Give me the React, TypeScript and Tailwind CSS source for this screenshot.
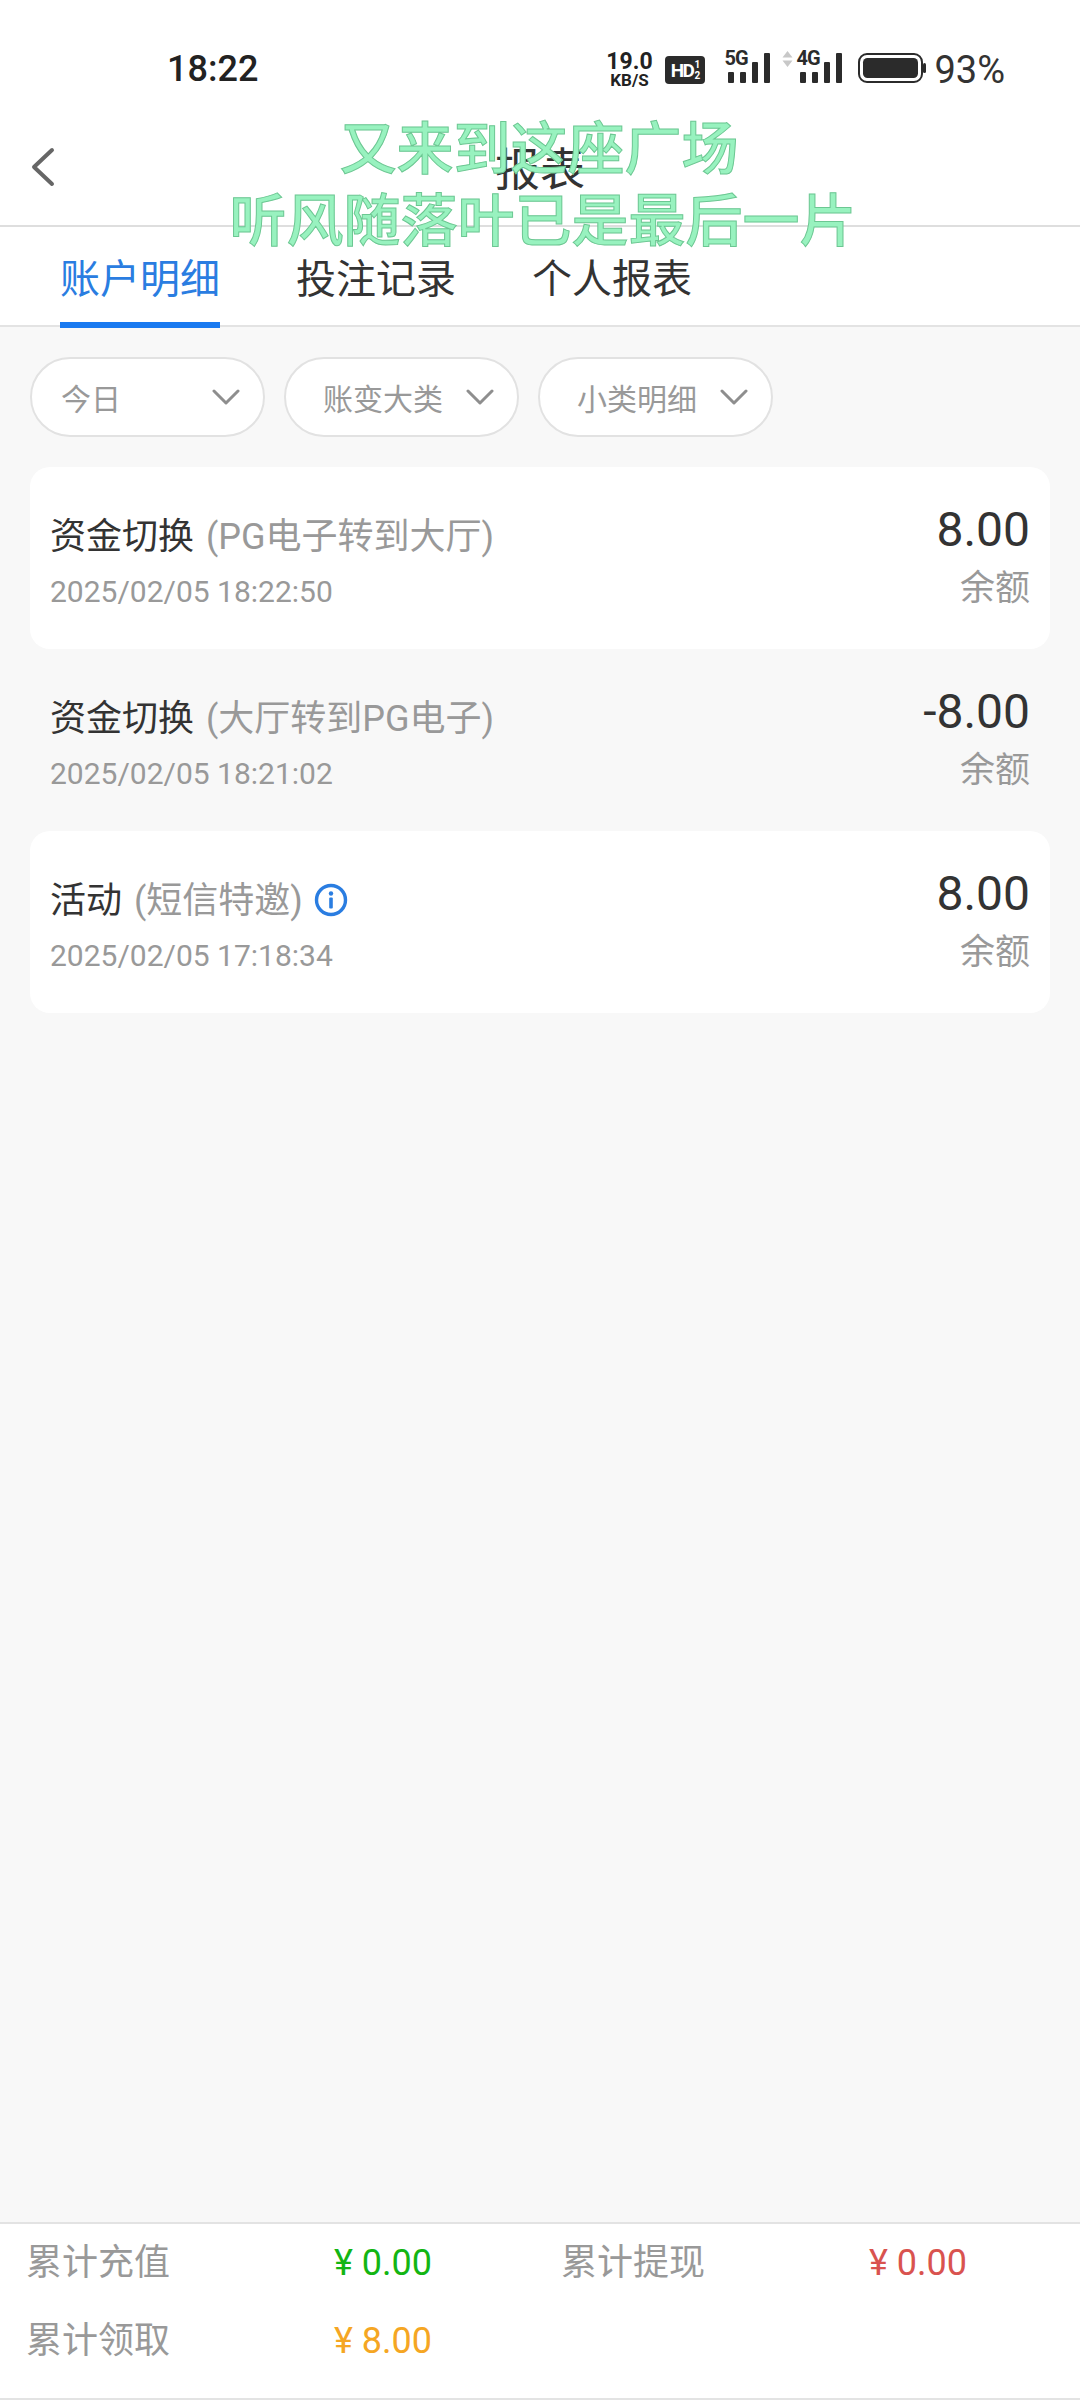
import React from "react";

const SANS = "font-['Roboto','Noto_Sans_CJK_SC',sans-serif]";

// Cell strength meter with a network label above the short bars
function Signal({ label, arrows }: { label: string; arrows?: boolean }) {
  return (
    <div className="relative h-[30px] w-[46px]">
      {arrows && (
        <svg className="absolute left-[-14px] top-[-2px]" width="11" height="16" viewBox="0 0 11 16">
          <path d="M5.5 0l5 6.5h-10z M5.5 16l5-6.5h-10z" fill="#c8c8c8" />
        </svg>
      )}
      <span className="absolute left-0 top-[-5px] text-[20px] font-bold leading-[20px] tracking-[-1px] text-[#2b2b2b]">
        {label}
      </span>
      <svg className="absolute left-0 top-0" width="46" height="30" viewBox="0 0 46 30">
        <rect x="4" y="19" width="6" height="11" rx="1" fill="#2b2b2b" />
        <rect x="16" y="19" width="6" height="11" rx="1" fill="#2b2b2b" />
        <rect x="28" y="9" width="6" height="21" rx="1" fill="#2b2b2b" />
        <rect x="40" y="0" width="6" height="30" rx="1" fill="#2b2b2b" />
      </svg>
    </div>
  );
}

function StatusBar() {
  return (
    <div className="flex h-[100px] shrink-0 items-start bg-white pl-[167px] pr-[75px] text-[#222]">
      <span className="mt-[49px] text-[36px] font-medium leading-[40px]">18:22</span>
      <div className="ml-auto mt-[52px] flex items-start">
        <div className="flex w-[46px] flex-col items-center">
          <span className="text-[23px] font-bold leading-[20px]">19.0</span>
          <span className="text-[17px] font-bold leading-[16px]">KB/S</span>
        </div>
        <div className="ml-[13px] mt-[4px] flex h-[28px] w-[40px] items-center justify-center rounded-[4px] bg-[#2b2b2b] text-white">
          <span className="text-[19px] font-bold leading-none tracking-[-1.5px]">HD</span>
          <span className="ml-[1px] flex flex-col text-[10px] font-bold leading-[11px]">
            <span>1</span>
            <span>2</span>
          </span>
        </div>
        <div className="ml-[19px] mt-[1px]">
          <Signal label="5G" />
        </div>
        <div className="ml-[26px] mt-[1px]">
          <Signal label="4G" arrows />
        </div>
        <svg className="ml-[16px] mt-[1px]" width="68" height="30" viewBox="0 0 68 30">
          <rect x="1" y="1" width="63" height="28" rx="8" fill="none" stroke="#2b2b2b" strokeWidth="2" />
          <rect x="5" y="5" width="55" height="20" rx="4.5" fill="#2b2b2b" />
          <rect x="65" y="10" width="3" height="10" rx="1.5" fill="#2b2b2b" />
        </svg>
        <span className="ml-[8px] mt-[-3px] text-[38px] leading-[42px] text-[#333]">93%</span>
      </div>
    </div>
  );
}

function Header() {
  return (
    <div className="relative flex h-[127px] shrink-0 items-center justify-center border-b-2 border-[#dedede] bg-white pt-[16px]">
      <svg className="absolute left-[29px] top-[47px]" width="26" height="40" viewBox="0 0 26 40">
        <path d="M23 3L5 20l18 17" fill="none" stroke="#666" strokeWidth="4" strokeLinecap="round" strokeLinejoin="round" />
      </svg>
      <span className="text-[45px] leading-[56px] text-[#333]">报表</span>
    </div>
  );
}

function Tabs() {
  return (
    <div className="flex h-[100px] shrink-0 gap-[76px] border-b-2 border-[#e3e3e3] bg-white pl-[60px] text-[40px] leading-[50px] text-[#333]">
      <div className="relative h-[101px] w-[160px] pt-[28px] text-[#2a7de1]">
        账户明细
        <div className="absolute bottom-0 left-0 h-[6px] w-full bg-[#1a7af0]" />
      </div>
      <div className="pt-[28px]">投注记录</div>
      <div className="pt-[28px]">个人报表</div>
    </div>
  );
}

function FilterPill({ label, long }: { label: string; long?: boolean }) {
  return (
    <div
      className={`flex h-[80px] w-[235px] items-center justify-between rounded-[40px] border-2 border-[#e2e2e2] bg-white pr-[23px] text-[30px] text-[#999] ${long ? "pl-[37px]" : "pl-[29px]"}`}
    >
      <span className="pt-[5px]">{label}</span>
      <svg width="28" height="16" viewBox="0 0 28 16">
        <path d="M2 2l12 12L26 2" fill="none" stroke="#8e8e8e" strokeWidth="3" strokeLinecap="round" strokeLinejoin="round" />
      </svg>
    </div>
  );
}

type Entry = {
  name: string;
  note: string;
  time: string;
  amount: string;
  card: boolean;
  info?: boolean;
};

const ENTRIES: Entry[] = [
  { name: "资金切换", note: "(PG电子转到大厅)", time: "2025/02/05 18:22:50", amount: "8.00", card: true },
  { name: "资金切换", note: "(大厅转到PG电子)", time: "2025/02/05 18:21:02", amount: "-8.00", card: false },
  { name: "活动", note: "(短信特邀)", time: "2025/02/05 17:18:34", amount: "8.00", card: true, info: true },
];

function EntryRow({ entry }: { entry: Entry }) {
  return (
    <div
      className={`flex h-[182px] items-start justify-between rounded-[20px] px-[20px] ${entry.card ? "bg-white" : ""}`}
    >
      <div className="pt-[43px]">
        <div className="flex h-[54px] items-center">
          <span className="text-[36px] leading-[54px] text-[#333]">{entry.name}</span>
          <span className="ml-[12px] text-[36px] leading-[54px] text-[#999]">{entry.note}</span>
          {entry.info && (
            <svg className="ml-[11px] mt-[-3px]" width="34" height="34" viewBox="0 0 34 34">
              <circle cx="17" cy="17" r="14.5" fill="none" stroke="#2a7de1" strokeWidth="3.4" />
              <circle cx="17" cy="10.5" r="2.2" fill="#2a7de1" />
              <rect x="15.2" y="14.5" width="3.6" height="11" rx="1" fill="#2a7de1" />
            </svg>
          )}
        </div>
        <div className="mt-[8px] text-[30px] leading-[40px] text-[#999]">{entry.time}</div>
      </div>
      <div className="flex flex-col items-end pt-[35px]">
        <span className="text-[48px] leading-[56px] text-[#333]">{entry.amount}</span>
        <span className="mt-[6px] text-[35px] leading-[50px] text-[#999]">余额</span>
      </div>
    </div>
  );
}

function Totals() {
  return (
    <div className="flex h-[178px] shrink-0 flex-col border-y-2 border-[#e3e3e3] bg-white text-[36px]">
      <div className="mt-[14px] flex h-[50px] items-center">
        <span className="ml-[26px] w-[308px] text-[#999]">累计充值</span>
        <span className="w-[227px] text-[#13b513]">¥ 0.00</span>
        <span className="w-[308px] text-[#999]">累计提现</span>
        <span className="text-[#d9534f]">¥ 0.00</span>
      </div>
      <div className="mt-[28px] flex h-[50px] items-center">
        <span className="ml-[26px] w-[308px] text-[#999]">累计领取</span>
        <span className="text-[#f5a623]">¥ 8.00</span>
      </div>
    </div>
  );
}

export default function App() {
  return (
    <div className={`relative flex h-[2400px] w-[1080px] flex-col overflow-hidden bg-[#f8f8f8] ${SANS}`}>
      <StatusBar />
      <Header />
      <Tabs />
      <div className="flex-1 px-[30px] pt-[30px]">
        <div className="flex gap-[19px]">
          <FilterPill label="今日" />
          <FilterPill label="账变大类" long />
          <FilterPill label="小类明细" long />
        </div>
        <div className="mt-[30px] flex flex-col">
          {ENTRIES.map((entry) => (
            <EntryRow key={entry.time} entry={entry} />
          ))}
        </div>
      </div>
      <Totals />
      {/* Floating lyric banner drawn over the header */}
      <div className="absolute left-[3px] top-[114px] w-full text-center text-[57px] font-medium leading-[72px] text-[#98f2bf] [-webkit-text-stroke:1px_#6cc792]">
        <div className="pr-[8px]">又来到这座广场</div>
        <div>听风随落叶已是最后一片</div>
      </div>
    </div>
  );
}
